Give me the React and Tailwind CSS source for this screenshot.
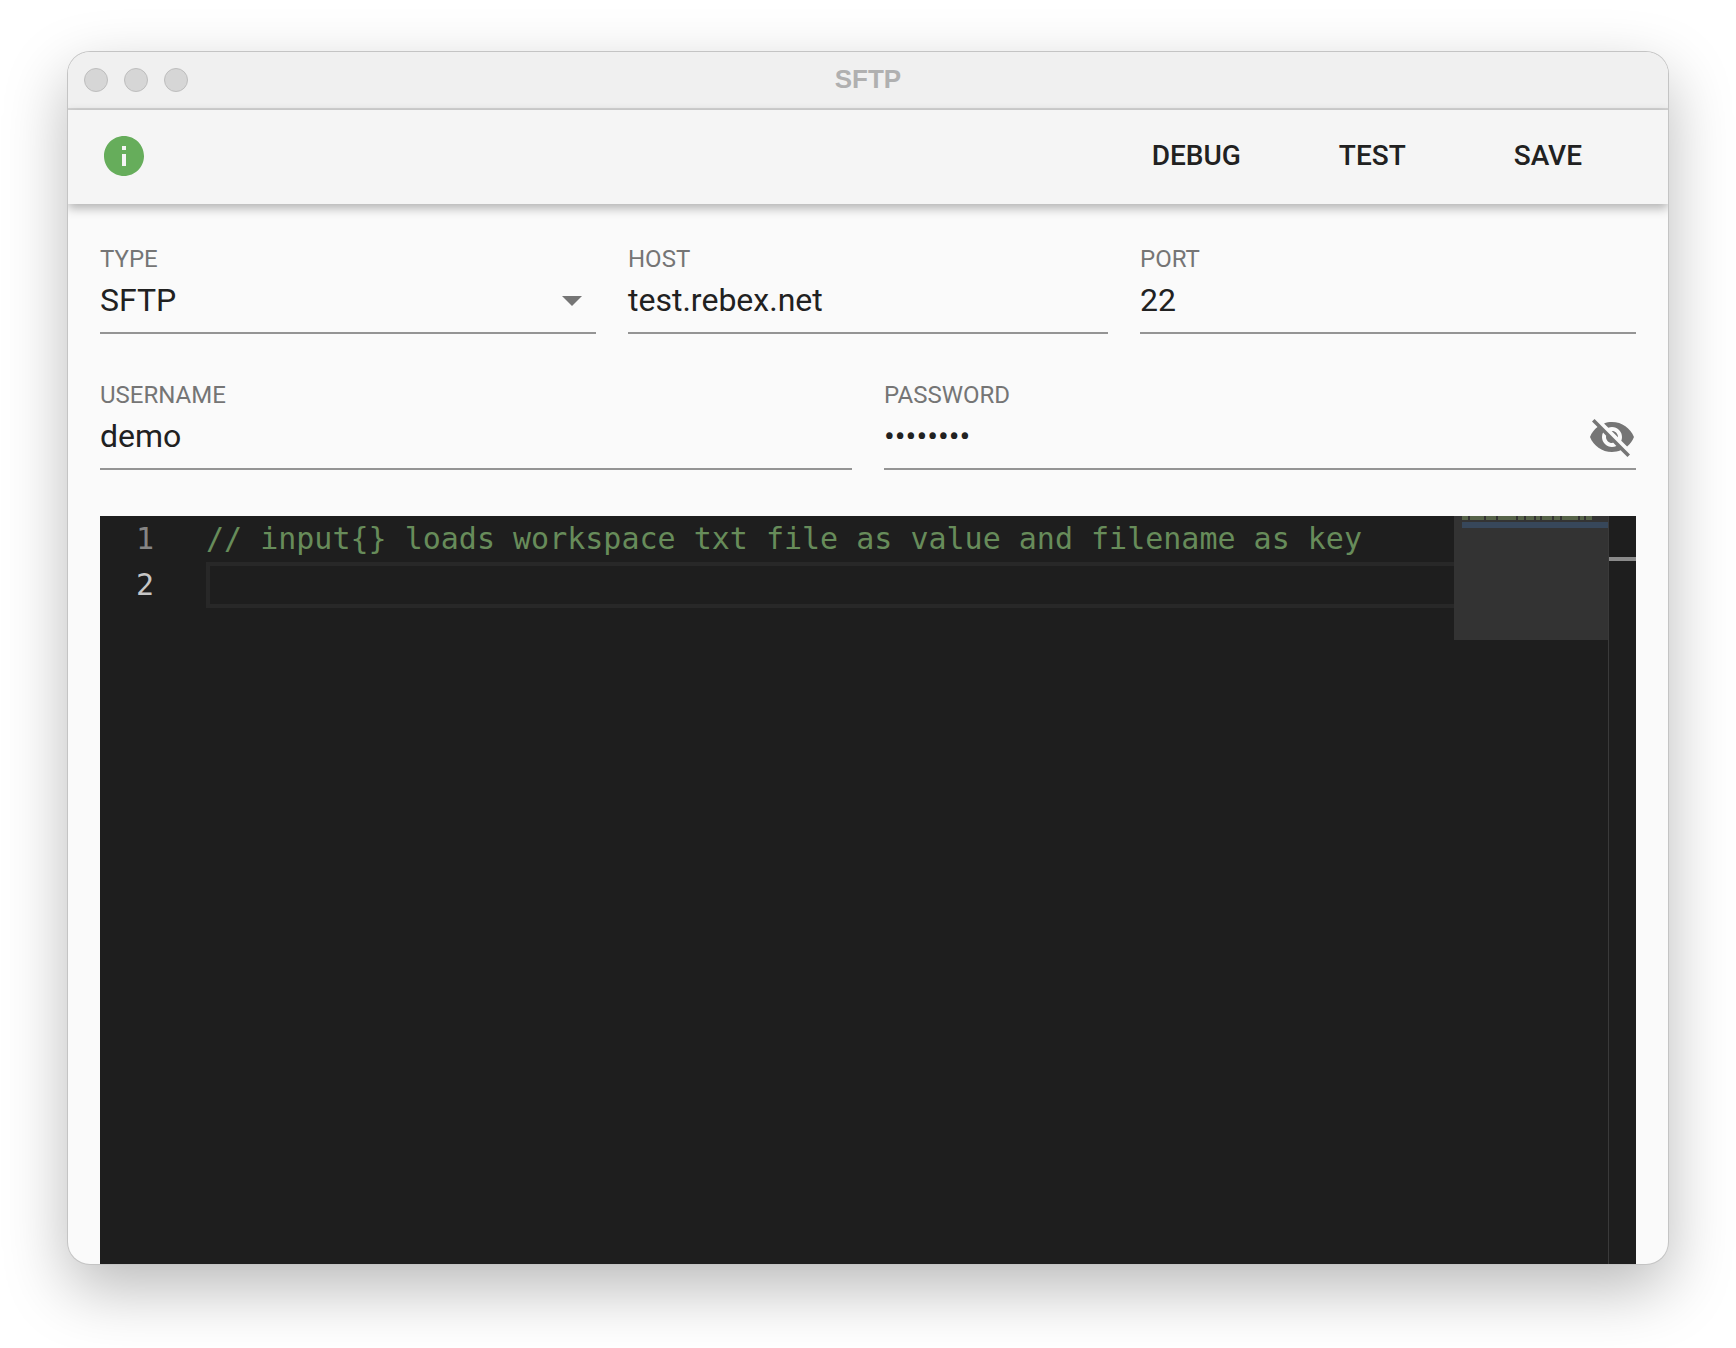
import React from 'react'

const Field = ({ label, value, className, children }) => (
  <div className={`flex flex-col pt-[1px] ${className}`}>
    <label className="h-[32px] text-[24px] leading-[28px] text-[#757575]">{label}</label>
    <div className="flex h-[57px] items-start justify-between border-b-2 border-[#949494] pt-[4px] text-[32px] leading-[38px] text-[#212121]">
      {value}
      {children}
    </div>
  </div>
)

const EyeOff = () => (
  <svg viewBox="0 0 24 24" className="mt-[-4px] h-[48px] w-[48px] fill-[#757575]">
    <path d="M12 7c2.76 0 5 2.24 5 5 0 .65-.13 1.26-.36 1.83l2.92 2.92c1.51-1.26 2.7-2.89 3.43-4.75-1.73-4.39-6-7.5-11-7.5-1.4 0-2.74.25-3.98.7l2.16 2.16C10.74 7.13 11.35 7 12 7zM2 4.27l2.28 2.28.46.46C3.08 8.3 1.78 10.02 1 12c1.73 4.39 6 7.5 11 7.5 1.55 0 3.03-.3 4.38-.84l.42.42L19.73 22 21 20.73 3.27 3 2 4.27zM7.53 9.8l1.55 1.55c-.05.21-.08.43-.08.65 0 1.66 1.34 3 3 3 .22 0 .44-.03.65-.08l1.55 1.55c-.67.33-1.41.53-2.2.53-2.76 0-5-2.24-5-5 0-.79.2-1.53.53-2.2zm4.31-.78l3.15 3.15.02-.16c0-1.66-1.34-3-3-3l-.17.01z" />
  </svg>
)

const miniBits = [6, 14, 10, 18, 6, 8, 4, 10, 6, 16, 4, 6]

const App = () => {
  return (
    <div className="h-[1348px] w-[1736px] overflow-hidden bg-white pt-[52px] pl-[68px] font-['Roboto',sans-serif]">
      <div className="flex h-[1212px] w-[1600px] flex-col overflow-hidden rounded-[22px] bg-[#fafafa] shadow-[0_0_0_1px_#c4c4c4,0_24px_64px_rgba(0,0,0,0.28)]">
        {/* title bar */}
        <div className="relative flex h-[58px] shrink-0 items-center gap-[16px] border-b-2 border-[#d4d4d4] bg-[#f0f0f0] pl-[16px]">
          <span className="h-[24px] w-[24px] rounded-full border border-[#bdbdbd] bg-[#d6d6d6]" />
          <span className="h-[24px] w-[24px] rounded-full border border-[#bdbdbd] bg-[#d6d6d6]" />
          <span className="h-[24px] w-[24px] rounded-full border border-[#bdbdbd] bg-[#d6d6d6]" />
          <span className="absolute inset-x-0 top-[12px] text-center font-['Liberation_Sans',sans-serif] text-[26px] leading-[30px] font-bold text-[#b0b0b0]">SFTP</span>
        </div>

        {/* toolbar */}
        <div className="relative z-10 flex h-[94px] shrink-0 items-center justify-between bg-[#f5f5f5] pr-[86px] pb-[2px] pl-[32px] shadow-[0_4px_10px_rgba(0,0,0,0.3)]">
          <svg viewBox="0 0 24 24" className="h-[48px] w-[48px] fill-[#66ad5b]">
            <path d="M12 2C6.48 2 2 6.48 2 12s4.48 10 10 10 10-4.48 10-10S17.52 2 12 2zm1 15h-2v-6h2v6zm0-8h-2V7h2v2z" />
          </svg>
          <div className="flex text-[28px] font-medium text-[#212121]">
            <span>DEBUG</span>
            <span className="ml-[98px]">TEST</span>
            <span className="ml-[108px]">SAVE</span>
          </div>
        </div>

        {/* form */}
        <div className="flex min-h-0 flex-1 flex-col px-[32px] pt-[40px]">
          <div className="flex gap-[32px]">
            <Field label="TYPE" value="SFTP" className="w-[496px]">
              <span className="mt-[15px] mr-[14px] h-0 w-0 border-x-[10px] border-t-[10px] border-x-transparent border-t-[#757575]" />
            </Field>
            <Field label="HOST" value="test.rebex.net" className="w-[480px]" />
            <Field label="PORT" value="22" className="w-[496px]" />
          </div>
          <div className="mt-[46px] flex gap-[32px]">
            <Field label="USERNAME" value="demo" className="w-[752px]" />
            <Field label="PASSWORD" className="w-[752px]" value="••••••••">
              <EyeOff />
            </Field>
          </div>

          {/* editor */}
          <div className="relative mt-[46px] flex min-h-0 flex-1 bg-[#1e1e1e] font-['DejaVu_Sans_Mono',monospace] text-[30px] leading-[46px]">
            <div className="w-[106px] shrink-0 pr-[52px] text-right text-[#858585]">
              <div>1</div>
              <div className="text-[#c6c6c6]">2</div>
            </div>
            <div className="min-w-0 flex-1">
              <div className="whitespace-pre text-[#678c5a]">{'// input{} loads workspace txt file as value and filename as key'}</div>
              <div className="h-[46px] border-4 border-[#282828]" />
            </div>

            {/* minimap */}
            <div className="absolute top-0 right-[28px] h-[124px] w-[154px] bg-[#333333]">
              <div className="flex h-[4px] gap-[2px] pl-[8px]">
                {miniBits.map((w, i) => (
                  <span key={i} className="h-full bg-[#566349]" style={{ width: w }} />
                ))}
              </div>
              <div className="mt-[2px] ml-[8px] h-[6px] bg-[#37475a]" />
            </div>

            {/* scrollbar */}
            <div className="w-[28px] shrink-0 border-l border-[#3a3a3a]">
              <div className="mt-[41px] h-[4px] bg-[#8a8a8a]" />
            </div>
          </div>
        </div>
      </div>
    </div>
  )
}

export default App
